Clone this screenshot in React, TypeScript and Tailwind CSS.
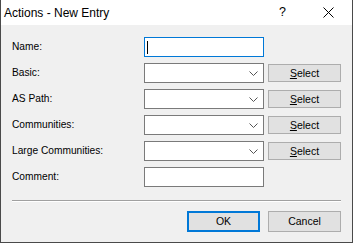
const font = { fontFamily: '"Liberation Sans", Arial, sans-serif' };

function Chevron() {
  return (
    <svg width="9" height="5" viewBox="0 0 9 5" className="shrink-0">
      <path d="M0.5 0.5 L4.5 4.5 L8.5 0.5" fill="none" stroke="#555" strokeWidth="1" />
    </svg>
  );
}

function CloseIcon() {
  return (
    <svg width="11" height="11" viewBox="0 0 11 11" className="shrink-0">
      <path d="M0.5 0.5 L10.5 10.5 M10.5 0.5 L0.5 10.5" stroke="#000" strokeWidth="1" />
    </svg>
  );
}

function SelectButton() {
  return (
    <button className="w-[73px] h-[18px] border border-[#adadad] bg-[#e1e1e1] text-[10.5px] text-black leading-none flex items-center justify-center">
      <span>
        <span className="underline underline-offset-1">S</span>elect
      </span>
    </button>
  );
}

function ComboRow({ label }: { label: string }) {
  return (
    <div className="flex items-center h-5">
      <div className="w-[132px] text-[10.2px] text-black">{label}</div>
      <div className="w-[120px] h-5 border border-[#7a7a7a] bg-white flex items-center justify-end pr-[5px]">
        <Chevron />
      </div>
      <div className="ml-1">
        <SelectButton />
      </div>
    </div>
  );
}

export default function App() {
  return (
    <div style={font} className="w-[353px] h-[243px] flex flex-col bg-[#f0f0f0] border-x border-b border-[#4a4a4a]">
      <div className="h-[25px] bg-white flex items-center pl-[3px] pr-[18px]">
        <span className="text-[12px] text-black">Actions - New Entry</span>
        <span className="ml-auto text-[12.5px] text-black mr-[37px]">?</span>
        <CloseIcon />
      </div>

      <div className="flex-1 flex flex-col pt-3 px-[11px]">
        <div className="flex flex-col gap-[6px]">
          <div className="flex items-center h-5">
            <div className="w-[132px] text-[10.2px] text-black">Name:</div>
            <div className="w-[120px] h-5 border border-[#0078d7] bg-white flex items-center pl-[2px]">
              <div className="w-px h-[13px] bg-black" />
            </div>
          </div>
          <ComboRow label="Basic:" />
          <ComboRow label="AS Path:" />
          <ComboRow label="Communities:" />
          <ComboRow label="Large Communities:" />
          <div className="flex items-center h-5">
            <div className="w-[132px] text-[10.2px] text-black">Comment:</div>
            <div className="w-[120px] h-5 border border-[#7a7a7a] bg-white" />
          </div>
        </div>

        <div className="mt-[13px] w-[329px] border-t border-[#a0a0a0] border-b border-b-white" />

        <div className="mt-[9px] flex justify-end gap-2 w-[329px]">
          <button className="w-[73px] h-[21px] border-2 border-[#0078d7] bg-[#e1e1e1] text-[10.5px] text-black">
            OK
          </button>
          <button className="w-[73px] h-[21px] border border-[#adadad] bg-[#e1e1e1] text-[10.5px] text-black">
            Cancel
          </button>
        </div>
      </div>
    </div>
  );
}
